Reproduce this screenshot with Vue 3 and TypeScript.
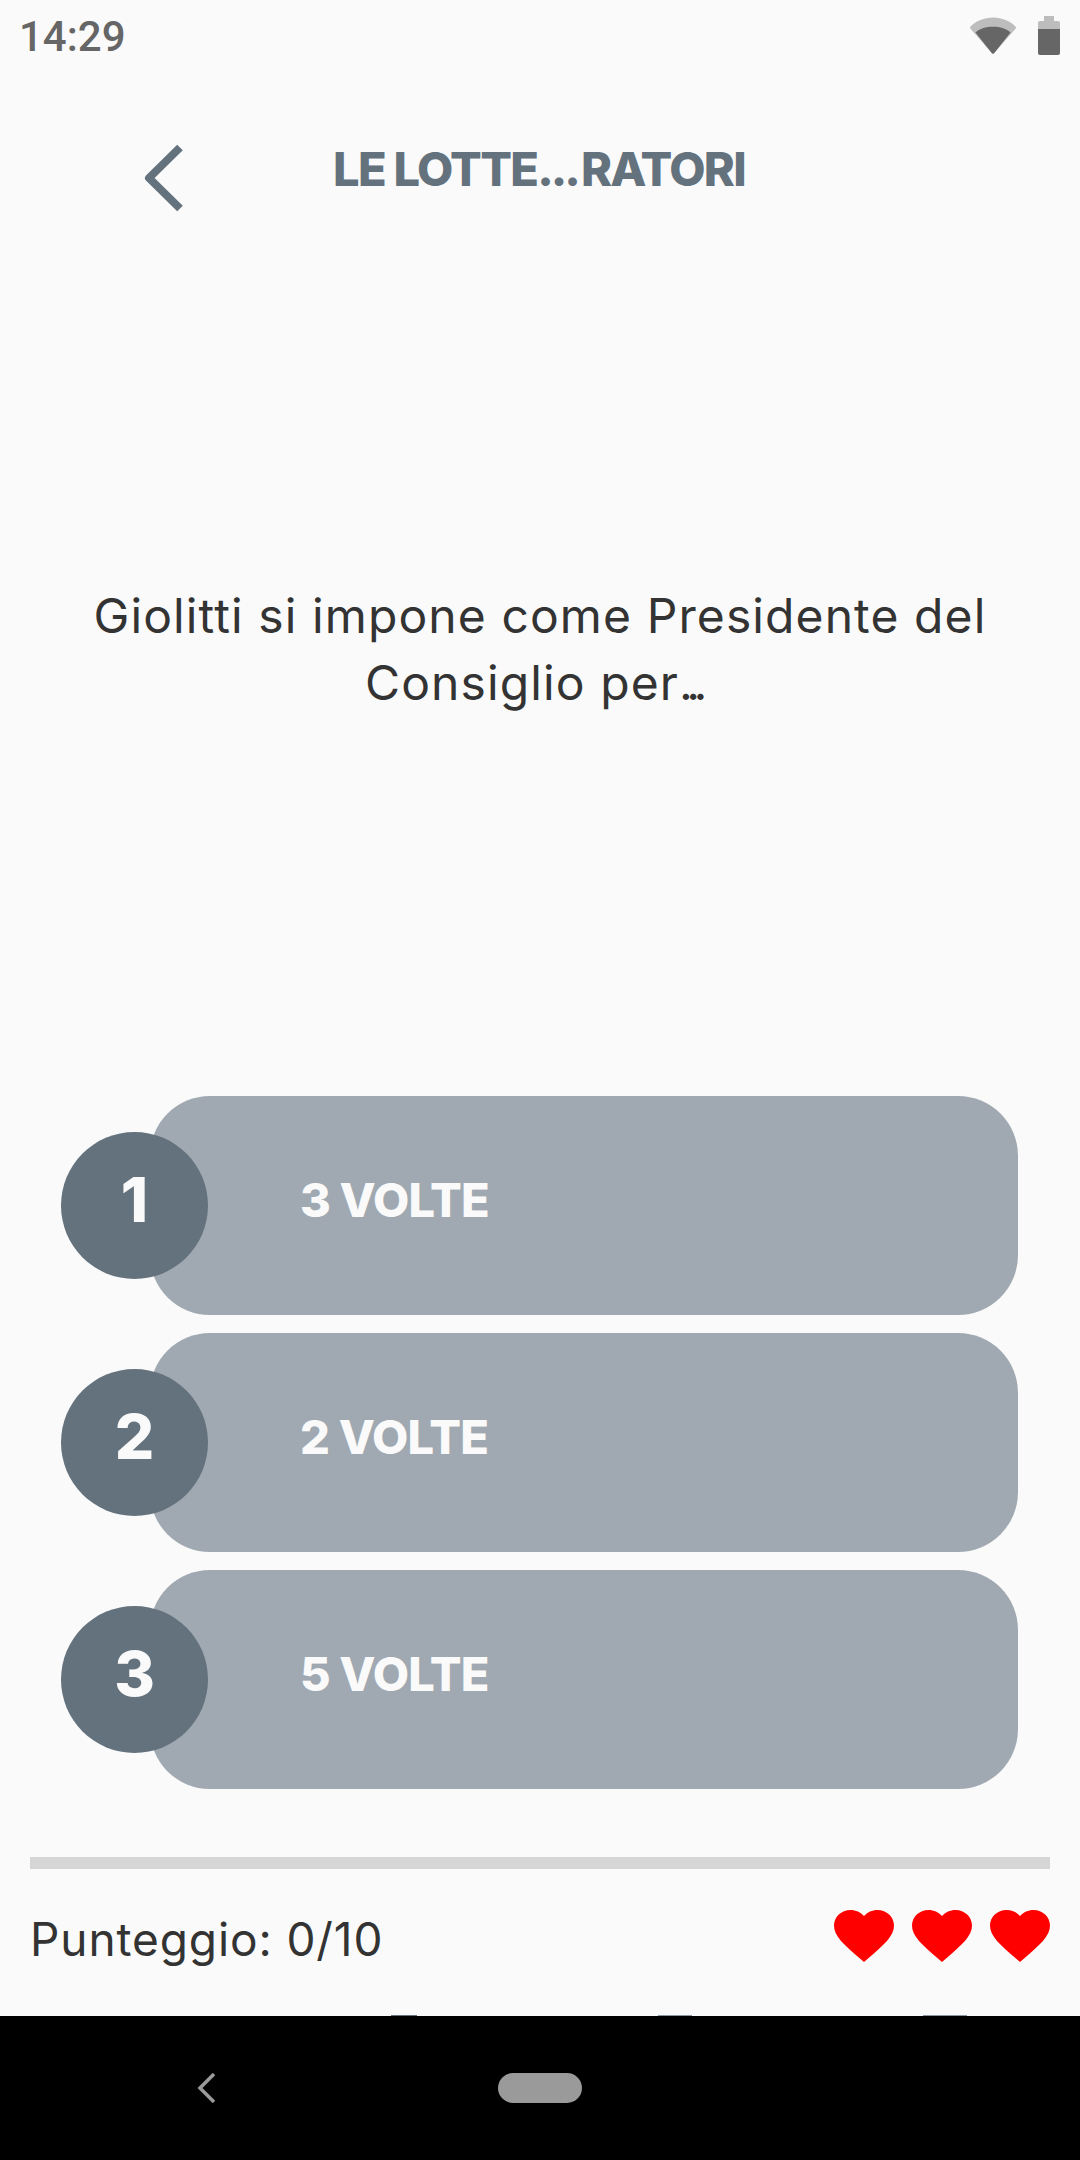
<template>
  <div class="screen">
    <div class="status-bar">
      <span class="clock">14:29</span>
      <div class="status-icons">
        <svg class="wifi" width="46" height="37" viewBox="0 0 46 37">
          <path d="M0.5 9.5C6 4 14 0.5 23 0.5S40 4 45.5 9.5a1.6 1.6 0 0 1 .2 1.9L24.5 35.8a2 2 0 0 1-3 0L.3 11.4a1.6 1.6 0 0 1 .2-1.9z" fill="#bdbdbd" />
          <path d="M5.5 15.5C10 11.5 16 9.8 23 9.8s13 1.7 17.5 5.7L24.5 35.8a2 2 0 0 1-3 0z" fill="#666" />
        </svg>
        <svg class="battery" width="22" height="39" viewBox="0 0 22 39">
          <path d="M6 0h10v5h4a2 2 0 0 1 2 2v6H0V7a2 2 0 0 1 2-2h4z" fill="#bdbdbd" />
          <path d="M0 13h22v24a2 2 0 0 1-2 2H2a2 2 0 0 1-2-2z" fill="#666" />
        </svg>
      </div>
    </div>

    <header class="top-bar">
      <svg class="back" width="40" height="68" viewBox="0 0 40 68">
        <path d="M36 3.5 5 34l31 30.5" fill="none" stroke="#64727e" stroke-width="8" stroke-linejoin="round" />
      </svg>
      <h1 class="title">LE LOTTE<span class="dots">...</span>RATORI</h1>
    </header>

    <main class="question">
      <p>Giolitti si impone come Presidente del<br />Consiglio per<span class="dots">...</span></p>
    </main>

    <section class="options">
      <div v-for="(answer, i) in answers" :key="answer" class="option">
        <div class="badge">{{ i + 1 }}</div>
        <div class="pill">
          <span class="pill-text">{{ answer }}</span>
        </div>
      </div>
    </section>

    <div class="progress"></div>

    <footer class="score-row">
      <span class="score">Punteggio: 0/10</span>
      <div class="hearts">
        <svg v-for="n in 3" :key="n" width="60" height="52" viewBox="2 3 20 18.35" preserveAspectRatio="none">
          <path d="M12 21.35l-1.45-1.32C5.4 15.36 2 12.28 2 8.5 2 5.42 4.42 3 7.5 3c1.74 0 3.41.81 4.5 2.09C13.09 3.81 14.76 3 16.5 3 19.58 3 22 5.42 22 8.5c0 3.78-3.4 6.86-8.55 11.54L12 21.35z" fill="#ff0000" />
        </svg>
      </div>
    </footer>

    <nav class="nav-bar">
      <span class="sliver sliver-a"></span>
      <span class="sliver sliver-b"></span>
      <span class="sliver sliver-c"></span>
      <svg class="nav-back" width="20" height="30" viewBox="0 0 20 30">
        <path d="M17 1 3 15l14 14" fill="none" stroke="#9a9a9a" stroke-width="3.5" />
      </svg>
      <div class="nav-home"></div>
    </nav>
  </div>
</template>

<script setup lang="ts">
const answers: string[] = ['3 VOLTE', '2 VOLTE', '5 VOLTE'];
</script>

<style scoped>
.screen {
  width: 1080px;
  height: 2160px;
  display: flex;
  flex-direction: column;
  background: #fafafa;
  font-family: Inter, "Noto Sans", sans-serif;
  overflow: hidden;
}

.status-bar {
  height: 74px;
  display: flex;
  justify-content: space-between;
  padding: 16px 20px 0 19px;
  box-sizing: border-box;
}

.clock {
  font-family: Roboto, sans-serif;
  font-size: 42px;
  font-weight: 500;
  line-height: 42px;
  color: #666;
}

.status-icons {
  display: flex;
  align-items: flex-start;
  gap: 22px;
}

.wifi {
  margin-top: 1px;
}

.top-bar {
  height: 120px;
  display: flex;
  align-items: center;
  margin-top: 34px;
  padding-left: 144px;
}

.back {
  flex-shrink: 0;
  margin-top: 20px;
  margin-right: 149px;
}

.title {
  margin: 0;
  font-size: 47px;
  font-weight: 800;
  letter-spacing: -1.7px;
  color: #64727e;
}

.dots {
  letter-spacing: -3px;
  margin-right: 3px;
}

.question {
  height: 868px;
  box-sizing: border-box;
  padding-top: 354px;
  text-align: center;
  color: #333;
}

.question p {
  margin: 0;
  font-size: 48px;
  line-height: 67px;
  letter-spacing: 1.1px;
}

.question .dots {
  letter-spacing: -6.5px;
  margin-right: 14px;
}

.options {
  display: flex;
  flex-direction: column;
  gap: 18px;
  padding-left: 61px;
  padding-right: 62px;
}

.option {
  display: flex;
  align-items: center;
}

.badge {
  width: 147px;
  height: 147px;
  flex-shrink: 0;
  margin-right: -58px;
  position: relative;
  border-radius: 50%;
  background: #64727e;
  color: #fafafa;
  font-size: 62px;
  font-weight: 800;
  display: flex;
  align-items: center;
  justify-content: center;
  padding-bottom: 12px;
  box-sizing: border-box;
}

.pill {
  flex: 1;
  height: 219px;
  border-radius: 60px;
  background: #a0a9b1;
  display: flex;
  align-items: center;
  padding-left: 150px;
  padding-bottom: 12px;
  box-sizing: border-box;
}

.pill-text {
  font-size: 47px;
  font-weight: 800;
  letter-spacing: -0.8px;
  color: #fafafa;
}

.progress {
  height: 12px;
  margin: 68px 30px 0;
  background: #d6d6d6;
}

.score-row {
  flex: 1;
  display: flex;
  align-items: center;
  justify-content: space-between;
  padding: 0 30px 8px;
}

.score {
  font-size: 46px;
  letter-spacing: 0.9px;
  color: #333;
}

.hearts {
  display: flex;
  gap: 18px;
  margin-bottom: 6px;
}

.nav-bar {
  height: 144px;
  background: #000;
  position: relative;
  display: flex;
  align-items: flex-start;
  padding: 57px 0 0 197px;
  box-sizing: border-box;
}

.sliver {
  position: absolute;
  top: -1px;
  height: 1px;
  background: #8b96a0;
}

.sliver-a {
  left: 391px;
  width: 26px;
  background: #64727e;
}

.sliver-b {
  left: 658px;
  width: 34px;
}

.sliver-c {
  left: 923px;
  width: 44px;
}

.nav-back {
  flex-shrink: 0;
  margin-right: 281px;
}

.nav-home {
  width: 84px;
  height: 30px;
  border-radius: 15px;
  background: #9a9a9a;
}
</style>

<style>
html, body {
  margin: 0;
  background: #fafafa;
}
</style>
